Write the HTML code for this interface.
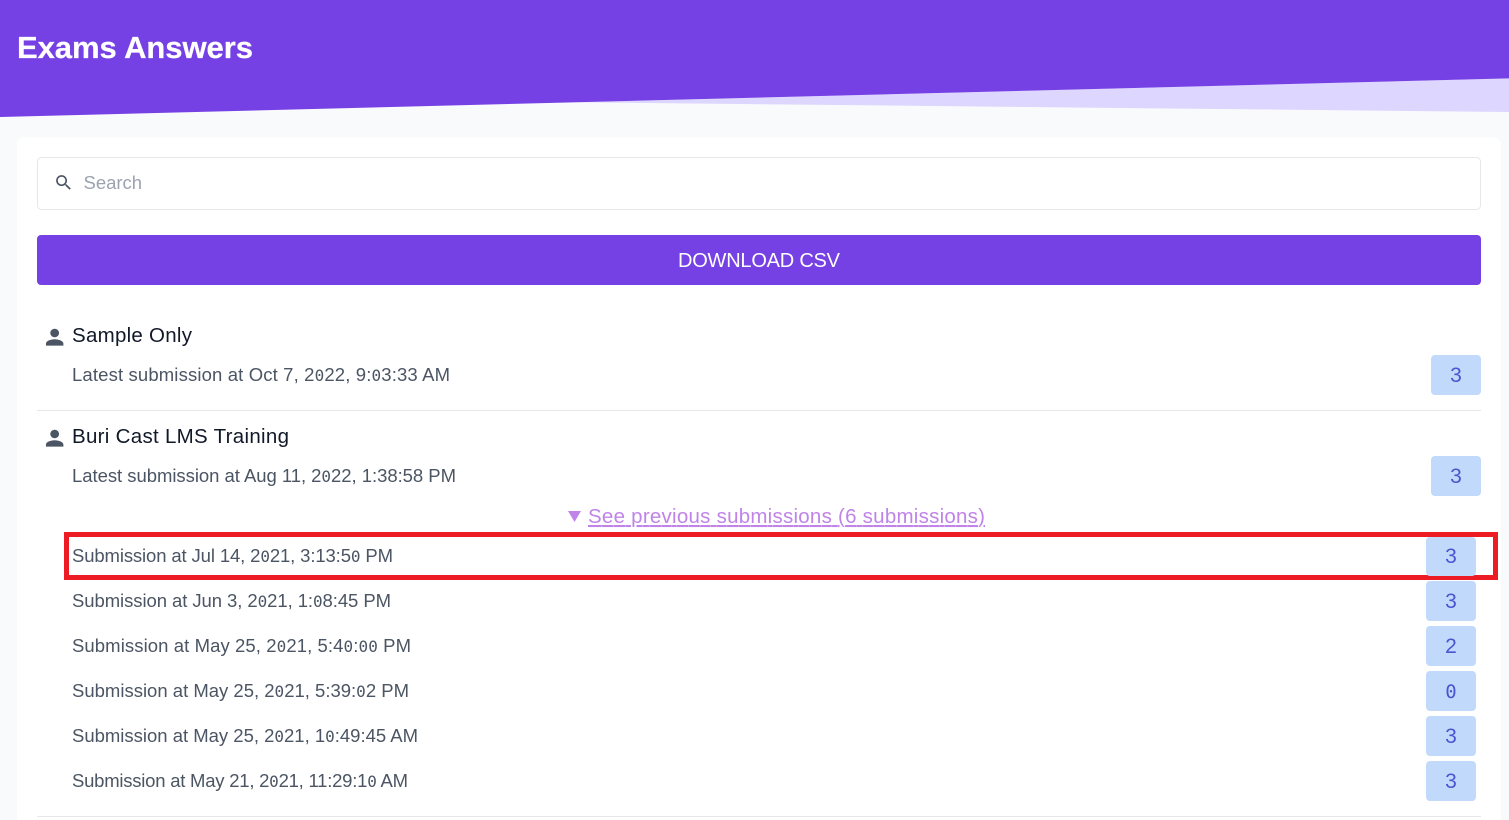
<!DOCTYPE html>
<html lang="en">
<head>
<meta charset="utf-8">
<title>Exams Answers</title>
<style>
html,body{margin:0;padding:0;width:1509px;height:820px;overflow:hidden;background:#f9fafb}
svg{display:block}
text{font-family:"Liberation Sans",sans-serif}
.t{font-size:18.5px;fill:#4b5563}
.n{font-size:20.5px;fill:#111827}
.b{font-size:21px;fill:#4a55cf;text-anchor:middle;font-family:"Liberation Sans",sans-serif}
.bg{fill:#c1dafc}
.z{font-family:"DejaVu Sans Mono",monospace;font-size:16px}
</style>
</head>
<body>
<svg width="1509" height="820" viewBox="0 0 1509 820" xmlns="http://www.w3.org/2000/svg">
<rect width="1509" height="820" fill="#f9fafb"/>
<polygon points="578,102.3 1509,78.4 1509,112 1000,106.7" fill="#ddd6fe"/>
<polygon points="0,0 1509,0 1509,78.4 0,117" fill="#7540e4"/>
<text x="17" y="58" font-size="31" font-weight="700" fill="#fff" stroke="#fff" stroke-width=".25" textLength="236">Exams Answers</text>

<rect x="17" y="137" width="1484" height="700" rx="8" fill="#fff"/>

<rect x="37.5" y="157.5" width="1443" height="52" rx="4" fill="#fff" stroke="#e5e7eb"/>
<path transform="translate(53.6 172.6) scale(.84)" fill="#4b5563" d="M15.5 14h-.79l-.28-.27C15.41 12.59 16 11.11 16 9.5 16 5.91 13.09 3 9.5 3S3 5.91 3 9.5 5.91 16 9.5 16c1.61 0 3.09-.59 4.23-1.57l.27.28v.79l5 4.99L20.49 19l-4.99-5zm-6 0C7.01 14 5 11.99 5 9.5S7.01 5 9.5 5 14 7.01 14 9.5 11.99 14 9.5 14z"/>
<text x="83.5" y="189" font-size="18.5" fill="#9ca3af" textLength="58.5">Search</text>

<rect x="37" y="235" width="1444" height="50" rx="4" fill="#7540e4"/>
<text x="678" y="267" font-size="20" fill="#fff" textLength="162">DOWNLOAD CSV</text>

<path transform="translate(41.6 324.6) scale(1.09 1.05)" fill="#4b5563" d="M12 12c2.21 0 4-1.79 4-4s-1.79-4-4-4-4 1.79-4 4 1.79 4 4 4zm0 2c-2.67 0-8 1.34-8 4v2h16v-2c0-2.66-5.33-4-8-4z"/>
<text class="n" x="72" y="342" textLength="120">Sample Only</text>
<text class="t" x="72" y="381" textLength="378">Latest submission at Oct 7, 2<tspan class="z">0</tspan>22, 9:<tspan class="z">0</tspan>3:33 AM</text>
<rect class="bg" x="1431" y="355" width="50" height="40" rx="4"/>
<text class="b" x="1456" y="382">3</text>
<rect x="37" y="410" width="1444" height="1" fill="#e5e7eb"/>

<path transform="translate(41.6 425.6) scale(1.09 1.05)" fill="#4b5563" d="M12 12c2.21 0 4-1.79 4-4s-1.79-4-4-4-4 1.79-4 4 1.79 4 4 4zm0 2c-2.67 0-8 1.34-8 4v2h16v-2c0-2.66-5.33-4-8-4z"/>
<text class="n" x="72" y="443" textLength="217">Buri Cast LMS Training</text>
<text class="t" x="72" y="482" textLength="384">Latest submission at Aug 11, 2<tspan class="z">0</tspan>22, 1:38:58 PM</text>
<rect class="bg" x="1431" y="456" width="50" height="40" rx="4"/>
<text class="b" x="1456" y="483">3</text>

<polygon points="568,511 581,511 574.5,522" fill="#c084e8"/>
<text x="588" y="523" font-size="20.5" fill="#c084e8" text-decoration="underline" textLength="397">See previous submissions (6 submissions)</text>

<rect x="66.5" y="534.5" width="1429" height="43" fill="none" stroke="#ed1c24" stroke-width="5"/>

<text class="t" x="72" y="562" textLength="321">Submission at Jul 14, 2<tspan class="z">0</tspan>21, 3:13:5<tspan class="z">0</tspan> PM</text>
<rect class="bg" x="1426" y="537" width="50" height="39" rx="4"/>
<text class="b" x="1451" y="563">3</text>

<text class="t" x="72" y="607" textLength="319">Submission at Jun 3, 2<tspan class="z">0</tspan>21, 1:<tspan class="z">0</tspan>8:45 PM</text>
<rect class="bg" x="1426" y="581" width="50" height="40" rx="4"/>
<text class="b" x="1451" y="608">3</text>

<text class="t" x="72" y="652" textLength="339">Submission at May 25, 2<tspan class="z">0</tspan>21, 5:4<tspan class="z">0</tspan>:<tspan class="z">00</tspan> PM</text>
<rect class="bg" x="1426" y="626" width="50" height="40" rx="4"/>
<text class="b" x="1451" y="653">2</text>

<text class="t" x="72" y="697" textLength="337">Submission at May 25, 2<tspan class="z">0</tspan>21, 5:39:<tspan class="z">0</tspan>2 PM</text>
<rect class="bg" x="1426" y="671" width="50" height="40" rx="4"/>
<text class="b" x="1451" y="698" style="font-family:'DejaVu Sans Mono',monospace;font-size:19px">0</text>

<text class="t" x="72" y="742" textLength="346">Submission at May 25, 2<tspan class="z">0</tspan>21, 1<tspan class="z">0</tspan>:49:45 AM</text>
<rect class="bg" x="1426" y="716" width="50" height="40" rx="4"/>
<text class="b" x="1451" y="743">3</text>

<text class="t" x="72" y="787" textLength="336">Submission at May 21, 2<tspan class="z">0</tspan>21, 11:29:1<tspan class="z">0</tspan> AM</text>
<rect class="bg" x="1426" y="761" width="50" height="40" rx="4"/>
<text class="b" x="1451" y="788">3</text>

<rect x="37" y="816" width="1444" height="1" fill="#e5e7eb"/>
</svg>
</body>
</html>
